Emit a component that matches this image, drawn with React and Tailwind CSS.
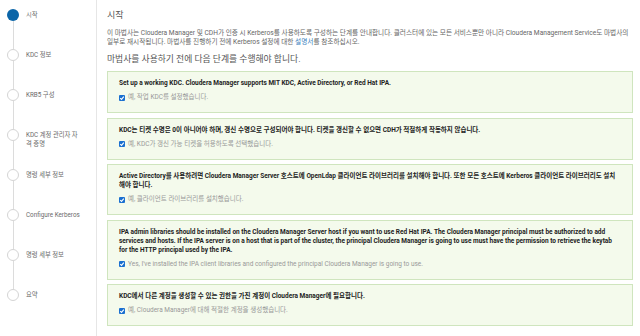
const steps = [
  { label: '시작', active: true },
  { label: 'KDC 정보' },
  { label: 'KRB5 구성' },
  { label: 'KDC 계정 관리자 자격 증명' },
  { label: '명령 세부 정보' },
  { label: 'Configure Kerberos' },
  { label: '명령 세부 정보' },
  { label: '요약' },
];

const checks = [
  {
    text: 'Set up a working KDC. Cloudera Manager supports MIT KDC, Active Directory, or Red Hat IPA.',
    check: '예, 작업 KDC를 설정했습니다.',
  },
  {
    text: 'KDC는 티켓 수명은 0이 아니어야 하며, 갱신 수명으로 구성되어야 합니다. 티켓을 갱신할 수 없으면 CDH가 적절하게 작동하지 않습니다.',
    check: '예, KDC가 갱신 가능 티켓을 허용하도록 선택했습니다.',
  },
  {
    text: 'Active Directory를 사용하려면 Cloudera Manager Server 호스트에 OpenLdap 클라이언트 라이브러리를 설치해야 합니다. 또한 모든 호스트에 Kerberos 클라이언트 라이브러리도 설치해야 합니다.',
    check: '예, 클라이언트 라이브러리를 설치했습니다.',
  },
  {
    text: 'IPA admin libraries should be installed on the Cloudera Manager Server host if you want to use Red Hat IPA. The Cloudera Manager principal must be authorized to add services and hosts. If the IPA server is on a host that is part of the cluster, the principal Cloudera Manager is going to use must have the permission to retrieve the keytab for the HTTP principal used by the IPA.',
    check: "Yes, I've installed the IPA client libraries and configured the principal Cloudera Manager is going to use.",
  },
  {
    text: 'KDC에서 다른 계정을 생성할 수 있는 권한을 가진 계정이 Cloudera Manager에 필요합니다.',
    check: '예, Cloudera Manager에 대해 적절한 계정을 생성했습니다.',
  },
];

function CheckBox() {
  return (
    <span className="flex h-[6px] w-[6px] shrink-0 items-center justify-center rounded-[1px] bg-[#1a6fd0]">
      <svg viewBox="0 0 10 10" className="h-[6px] w-[6px]">
        <path d="M2 5.2 L4.2 7.3 L8 2.8" fill="none" stroke="#fff" strokeWidth="1.8" />
      </svg>
    </span>
  );
}

export default function App() {
  return (
    <div
      className="flex h-[336px] w-[640px] overflow-hidden bg-white"
      style={{ fontFamily: 'Roboto, "Noto Sans CJK KR", sans-serif' }}
    >
      {/* wizard steps */}
      <div className="w-[97px] shrink-0 border-r border-[#e6e6e6] pt-[9px]">
        {steps.map((s, i) => (
          <div key={i} className="flex h-[40px]">
            <div className="flex w-[26px] shrink-0 flex-col items-center">
              <span
                className={
                  s.active
                    ? 'h-[12px] w-[12px] shrink-0 rounded-full bg-[#0b65a8]'
                    : 'h-[12px] w-[12px] shrink-0 rounded-full border border-[#d4d4d4] bg-white'
                }
              />
              {i < steps.length - 1 && <span className="w-px flex-1 bg-[#dcdcdc]" />}
            </div>
            <div className="mt-[1.5px] w-[54px] text-[6.3px] leading-[9px] text-[#6b6b6b]">{s.label}</div>
          </div>
        ))}
      </div>

      {/* main content */}
      <div className="flex-1 pl-[10px] pr-[7px] pt-[10px]">
        <h1 className="text-[9px] leading-[11px] text-[#555]">시작</h1>
        <p className="mt-[8px] text-[6.65px] leading-[9px] text-[#666]">
          이 마법사는 Cloudera Manager 및 CDH가 인증 시 Kerberos를 사용하도록 구성하는 단계를 안내합니다. 클러스터에 있는 모든 서비스뿐만 아니라 Cloudera Management Service도 마법사의 일부로 재시작됩니다. 마법사를 진행하기 전에 Kerberos 설정에 대한{' '}
          <span className="text-[#3c7fc0]">설명서</span>를 참조하십시오.
        </p>
        <h2 className="mt-[7px] text-[8.8px] leading-[11px] text-[#555]">마법사를 사용하기 전에 다음 단계를 수행해야 합니다.</h2>
        <div className="mt-[6px] flex flex-col gap-[4.5px]">
          {checks.map((c, i) => (
            <div key={i} className="border border-[#cfe5be] bg-[#f4faec] px-[11px] pb-[10px] pt-[7px]">
              <div className="text-[6.5px] font-bold leading-[9px] text-[#222]">{c.text}</div>
              <div className="mt-[5px] flex items-center gap-[3px] text-[6.5px] leading-[9px] text-[#999]">
                <CheckBox />
                <span>{c.check}</span>
              </div>
            </div>
          ))}
        </div>
      </div>
    </div>
  );
}
